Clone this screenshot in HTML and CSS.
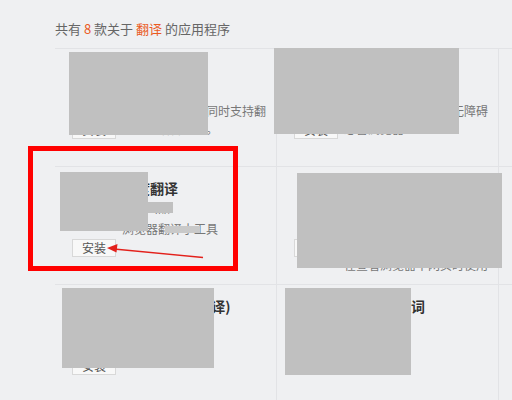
FILE: index.html
```html
<!DOCTYPE html>
<html lang="zh-CN">
<head>
<meta charset="utf-8">
<title>翻译 应用程序</title>
<link rel="stylesheet" href="styles.css">
</head>
<body>
<div class="page">
  <div class="summary">共有 <em>8</em> 款关于 <em>翻译</em> 的应用程序</div>
  <div class="grid">
    <div class="cell">
      <div class="side"><span class="btn">安装</span></div>
      <div class="info">
        <div class="title">谷歌翻译</div>
        <div class="meta">版本：2.0.1</div>
        <div class="desc">划词翻译网页，同时支持翻译多种语言文字。</div>
      </div>
    </div>
    <div class="cell">
      <div class="side"><span class="btn">安装</span></div>
      <div class="info">
        <div class="title">有道翻译</div>
        <div class="meta">版本：1.3.0</div>
        <div class="desc">让你阅读外文网页毫无障碍必备浏览器</div>
      </div>
    </div>
    <div class="cell empty"></div>

    <div class="cell">
      <div class="side"><span class="btn">安装</span></div>
      <div class="info">
        <div class="title">百度翻译</div>
        <div class="meta">百度出品</div>
        <div class="desc">浏览器翻译小工具</div>
      </div>
    </div>
    <div class="cell">
      <div class="side"><span class="btn">安装</span></div>
      <div class="info">
        <div class="title">必应翻译</div>
        <div class="meta">版本：1.1.2</div>
        <div class="desc">支持多种语言之间的互相翻译快速翻译选中的文字内容在查看浏览器中网页时使用</div>
      </div>
    </div>
    <div class="cell empty"></div>

    <div class="cell">
      <div class="side"><span class="btn">安装</span></div>
      <div class="info">
        <div class="title">网页翻译(中英译)</div>
        <div class="meta">版本：1.0.4</div>
      </div>
    </div>
    <div class="cell">
      <div class="side"><span class="btn">安装</span></div>
      <div class="info">
        <div class="title tight">金山词霸划词</div>
        <div class="meta">版本：3.2.0</div>
      </div>
    </div>
    <div class="cell empty"></div>
  </div>

  <div class="mask m1"></div>
  <div class="mask m2"></div>
  <div class="mask m3"></div>
  <div class="mask m3b"></div>
  <div class="mask m3c"></div>
  <div class="mask m4"></div>
  <div class="mask m5"></div>
  <div class="mask m6"></div>

  <div class="highlight"></div>
  <svg class="arrow" width="512" height="400" viewBox="0 0 512 400">
    <line x1="203" y1="257.5" x2="114" y2="249" stroke="#e3201b" stroke-width="1.4"/>
    <polygon points="107,248 117.5,244 116.5,252.5" fill="#e3201b"/>
  </svg>
</div>
</body>
</html>
```

FILE: styles.css
```css
* { box-sizing: border-box; }
html, body {
  margin: 0;
  padding: 0;
  background: #eff0f2;
}
body {
  font-family: "Noto Sans CJK SC", "Noto Sans", sans-serif;
  color: #666;
  width: 512px;
  height: 400px;
  overflow: hidden;
}
.page {
  position: relative;
  width: 512px;
  height: 400px;
  overflow: hidden;
}
.summary {
  height: 48px;
  padding: 21px 0 0 55px;
  font-size: 13px;
  line-height: 16px;
  color: #666;
}
.summary em {
  font-style: normal;
  color: #ea5a1f;
}
.grid {
  margin-left: 55px;
  display: grid;
  grid-template-columns: 222px 222px 1fr;
  grid-auto-rows: 118px;
  border-top: 1px solid #e2e3e6;
}
.cell {
  display: flex;
  overflow: hidden;
  border-bottom: 1px solid #e2e3e6;
  border-right: 1px solid #e2e3e6;
}
.cell.empty {
  border-right: none;
}
.side {
  width: 67px;
  flex: none;
  padding: 72px 0 0 17px;
}
.btn {
  display: block;
  width: 44px;
  height: 18px;
  line-height: 16px;
  font-size: 12px;
  text-align: center;
  color: #555;
  background: #f8f8f8;
  border: 1px solid #d8d8d8;
}
.info {
  width: 144px;
  flex: none;
  padding-top: 11px;
}
.title {
  font-size: 14px;
  line-height: 20px;
  font-weight: bold;
  color: #333;
  white-space: nowrap;
}
.title.tight {
  letter-spacing: -0.6px;
}
.meta {
  font-size: 12px;
  line-height: 20px;
  color: #777;
  white-space: nowrap;
}
.desc {
  margin-top: 2px;
  font-size: 12px;
  line-height: 18px;
  color: #777;
}
.mask {
  position: absolute;
  background: #c0c0c0;
}
.m1 { left: 69px; top: 52px; width: 139px; height: 83px; }
.m2 { left: 274px; top: 48px; width: 185px; height: 86px; }
.m3 { left: 60px; top: 172px; width: 88px; height: 59px; }
.m3b { left: 148px; top: 202px; width: 25px; height: 11px; }
.m3c { left: 165px; top: 226px; width: 35px; height: 7px; background: #c9c9c9; }
.m4 { left: 297px; top: 173px; width: 205px; height: 95px; }
.m5 { left: 62px; top: 288px; width: 152px; height: 80px; }
.m6 { left: 285px; top: 288px; width: 126px; height: 87px; }
.highlight {
  position: absolute;
  left: 28px;
  top: 146px;
  width: 210px;
  height: 125px;
  border: 5px solid #ff0000;
}
.arrow {
  position: absolute;
  left: 0;
  top: 0;
}
```
